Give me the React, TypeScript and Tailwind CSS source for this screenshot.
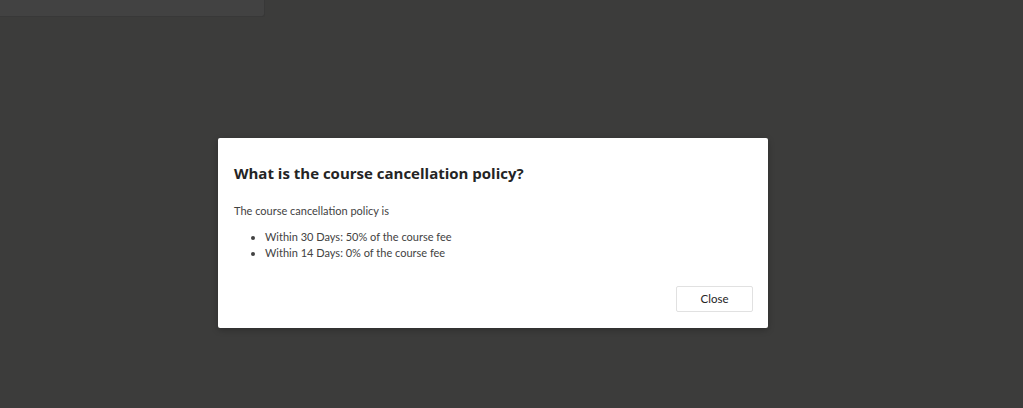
export default function App() {
  return (
    <div
      className="relative h-[408px] w-full overflow-hidden bg-[#3c3c3b]"
      style={{ fontFamily: 'Lato, "Open Sans", sans-serif' }}
    >
      <div className="h-[17px] w-[265px] rounded-br-[3px] border-r border-b border-[#383838] bg-[#424242]" />

      <div className="ml-[218px] mt-[121px] flex h-[190px] w-[550px] flex-col rounded-[2px] bg-white pt-[24px] pr-[15px] pb-4 pl-4 shadow-[0_2px_6px_rgba(0,0,0,0.25)]">
        <h2 className="font-['Open_Sans',sans-serif] text-[15px] leading-[22px] font-bold text-[#242424]">
          What is the course cancellation policy?
        </h2>
        <p className="mt-[19px] text-[11px] leading-[16px] text-[#424242]">The course cancellation policy is</p>
        <ul className="mt-[10px] list-disc pl-[31px] text-[11px] leading-[16px] text-[#424242]">
          <li>Within 30 Days: 50% of the course fee</li>
          <li>Within 14 Days: 0% of the course fee</li>
        </ul>
        <div className="mt-auto flex justify-end">
          <button
            type="button"
            className="h-[26px] w-[77px] rounded-[2px] border border-[#e1e1e1] bg-white text-[11.5px] text-[#242424]"
          >
            Close
          </button>
        </div>
      </div>
    </div>
  );
}
